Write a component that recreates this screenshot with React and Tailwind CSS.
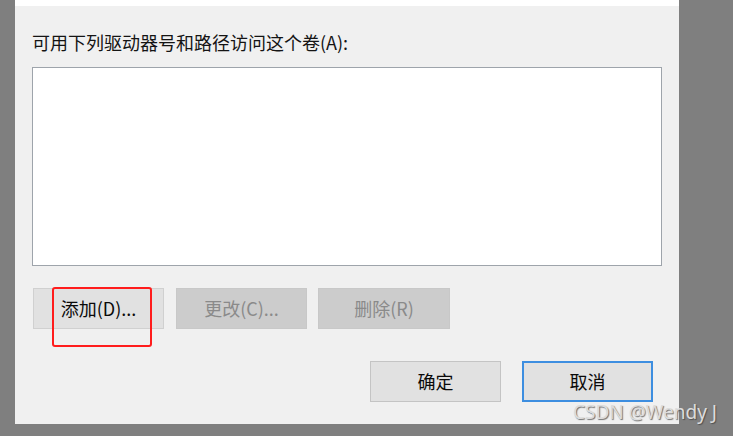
export default function App() {
  const font = {
    fontFamily: '"Microsoft YaHei", "Noto Sans CJK SC", "Noto Sans", sans-serif',
  };

  return (
    <div
      className="relative h-[436px] w-[733px] overflow-hidden bg-[#7f7f7f]"
      style={font}
    >
      <div className="ml-[15px] flex h-[424px] w-[664px] flex-col">
        <div className="h-[6px] bg-white" />

        <div className="flex flex-1 flex-col bg-[#f0f0f0] pl-[17px]">
          <p className="mt-[24px] text-[18px] leading-[24px] text-[#141414]">
            可用下列驱动器号和路径访问这个卷(A):
          </p>

          <div className="mt-[13px] h-[199px] w-[630px] border border-[#9ea4ab] bg-white" />

          <div className="mt-[22px] flex pl-[1px]">
            <button
              type="button"
              className="h-[41px] w-[131px] border border-[#d0d0d0] bg-[#e1e1e1] text-[18px] text-[#0a0a0a]"
            >
              添加(D)...
            </button>

            <button
              type="button"
              disabled
              className="ml-[12px] h-[41px] w-[131px] border border-[#c8c8c8] bg-[#cccccc] text-[18px] text-[#8a8a8a]"
            >
              更改(C)...
            </button>

            <button
              type="button"
              disabled
              className="ml-[11px] h-[41px] w-[132px] border border-[#c8c8c8] bg-[#cccccc] text-[18px] text-[#8a8a8a]"
            >
              删除(R)
            </button>
          </div>

          <div className="mt-[32px] flex pl-[338px]">
            <button
              type="button"
              className="h-[41px] w-[131px] border border-[#c4c4c4] bg-[#e1e1e1] text-[18px] text-[#0a0a0a]"
            >
              确定
            </button>

            <button
              type="button"
              className="ml-[21px] h-[41px] w-[131px] border-2 border-[#3d8ee0] bg-[#e1e1e1] text-[18px] text-[#0a0a0a]"
            >
              取消
            </button>
          </div>
        </div>
      </div>

      {/* red highlight box */}
      <div className="absolute left-[52px] top-[287px] h-[60px] w-[100px] rounded-[3px] border-2 border-[#ff1c1c]" />

      {/* watermark */}
      <div
        className="absolute left-[573px] top-[400px] text-[19px] leading-[24px] text-[#dcdcdc]"
        style={{
          fontFamily: '"Noto Sans", "Liberation Sans", sans-serif',
          textShadow: "1px 1px 1px rgba(60,60,60,0.7)",
        }}
      >
        CSDN @Wendy J
      </div>
    </div>
  );
}
